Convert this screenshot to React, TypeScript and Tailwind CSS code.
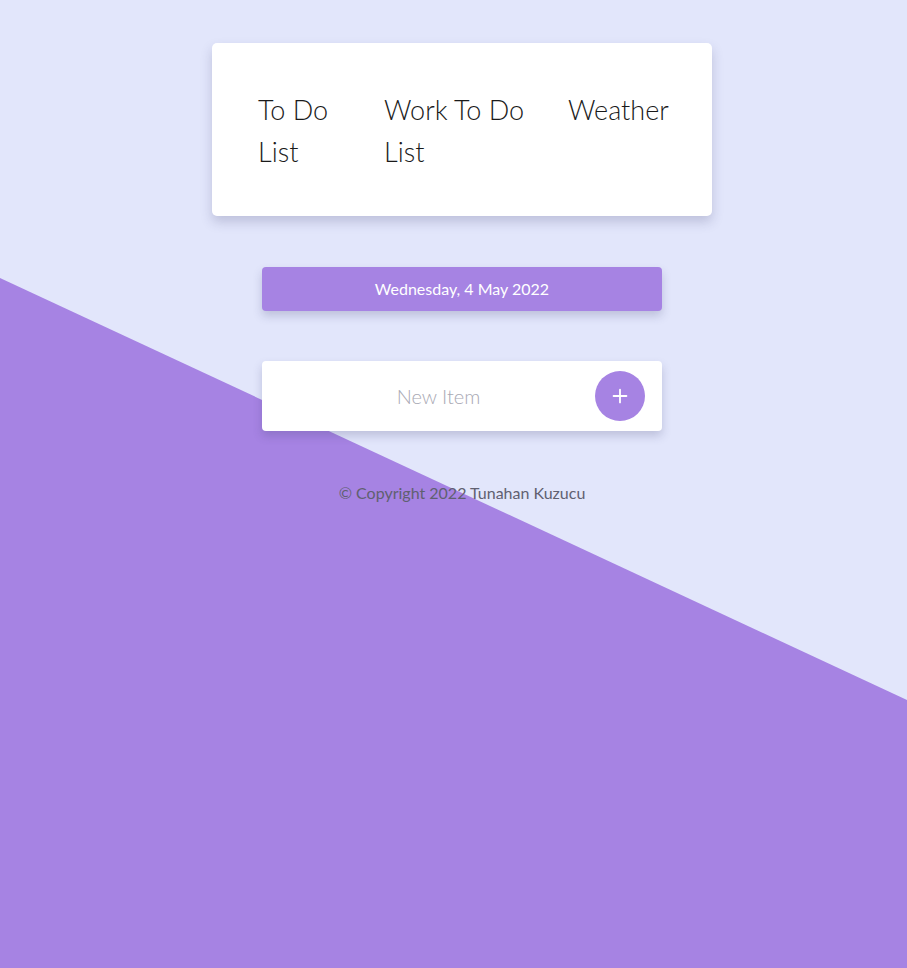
import { Plus } from 'lucide-react';

const tabs = [
  { label: 'To Do List', width: 'w-[100px] mr-[26px]' },
  { label: 'Work To Do List', width: 'w-[160px] mr-[24px]' },
  { label: 'Weather', width: 'flex-1 whitespace-nowrap' }
];

const App = () => {
  return (
    <div className="relative min-h-[968px] overflow-hidden bg-[#e2e6fb] font-['Lato',sans-serif]">
      {/* diagonal background */}
      <div className="absolute inset-0 bg-[#a683e3] [clip-path:polygon(0_278px,100%_700px,100%_100%,0_100%)]" />

      <div className="relative flex flex-col items-center pl-[17px] pt-[43px]">
        <nav className="flex h-[173px] w-[500px] rounded-[5px] bg-white px-[46px] shadow-[0_6px_12px_rgba(60,60,110,0.22)]">
          {tabs.map((tab) => (
            <a
              key={tab.label}
              className={`${tab.width} shrink-0 pt-[46px] text-[27px] font-light leading-[42px] text-[#1a1a1a]`}
            >
              {tab.label}
            </a>
          ))}
        </nav>

        <div className="mt-[51px] flex h-[44px] w-[400px] items-center justify-center rounded-[4px] bg-[#a683e3] text-[16px] text-white shadow-[0_5px_10px_rgba(60,60,110,0.22)]">
          Wednesday, 4 May 2022
        </div>

        <form className="mt-[50px] flex h-[70px] w-[400px] items-center rounded-[4px] bg-white pr-[17px] shadow-[0_5px_10px_rgba(60,60,110,0.22)]">
          <input
            type="text"
            placeholder="New Item"
            className="min-w-0 flex-1 bg-transparent pl-[20px] text-center text-[20px] font-light text-[#333] outline-none placeholder:text-[#a9a9b4]"
          />
          <button
            type="button"
            className="flex h-[50px] w-[50px] items-center justify-center rounded-full bg-[#a683e3] text-white"
          >
            <Plus size={22} strokeWidth={2} />
          </button>
        </form>

        <p className="mt-[50px] text-[16px] text-[#606070]">© Copyright 2022 Tunahan Kuzucu</p>
      </div>
    </div>
  );
};

export default App;
